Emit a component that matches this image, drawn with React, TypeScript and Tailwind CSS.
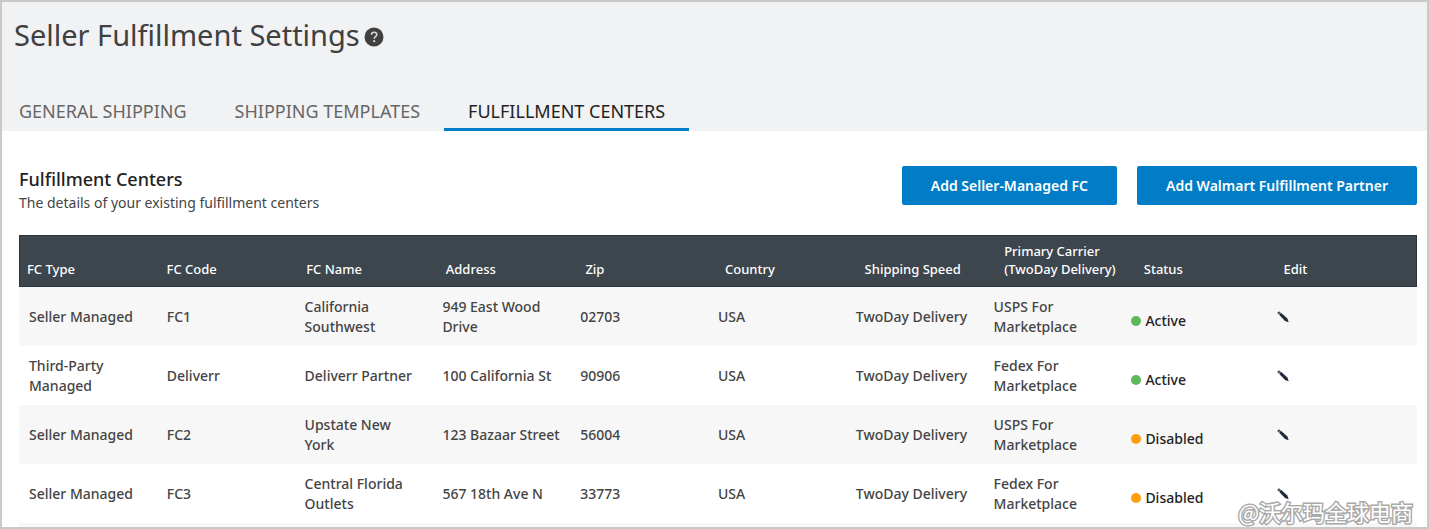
const columns = [
    "FC Type",
    "FC Code",
    "FC Name",
    "Address",
    "Zip",
    "Country",
    "Shipping Speed",
    "Primary Carrier (TwoDay Delivery)",
    "Status",
    "Edit",
]

type Center = {
    type: string
    code: string
    name: string
    address: string
    zip: string
    carrier: string
    active: boolean
}

const centers: Center[] = [
    { type: "Seller Managed", code: "FC1", name: "California Southwest", address: "949 East Wood Drive", zip: "02703", carrier: "USPS For Marketplace", active: true },
    { type: "Third-Party Managed", code: "Deliverr", name: "Deliverr Partner", address: "100 California St", zip: "90906", carrier: "Fedex For Marketplace", active: true },
    { type: "Seller Managed", code: "FC2", name: "Upstate New York", address: "123 Bazaar Street", zip: "56004", carrier: "USPS For Marketplace", active: false },
    { type: "Seller Managed", code: "FC3", name: "Central Florida Outlets", address: "567 18th Ave N", zip: "33773", carrier: "Fedex For Marketplace", active: false },
]

function HelpIcon() {
    return (
        <svg viewBox="0 0 20 20" className="size-5" aria-hidden="true">
            <circle cx="10" cy="10" r="9.5" fill="#404040" />
            <path d="M7.4 7.8c0-1.6 1.1-2.500 2.700-2.500s2.700 0.900 2.700 2.300c0 2.100-2.600 2.100-2.600 4.200" fill="none" stroke="#d4d5d6" strokeWidth="1.600" />
            <circle cx="10.200" cy="14.200" r="1.100" fill="#d4d5d6" />
        </svg>
    )
}

function PencilIcon() {
    return (
        <svg viewBox="0 0 12 12" className="size-3" aria-hidden="true">
            <path d="M0.200 2 2 0.300 3.600 1.600 1.800 3.500Z" fill="#4a4a4a" />
            <path d="M2.100 3.700 4 1.800 10.400 7.600 11.700 11.300 8 10Z" fill="#1f2937" />
        </svg>
    )
}

function CenterRow({ center }: { center: Center }) {
    return (
        <tr className="grid h-[59px] grid-cols-10 items-center pr-5 odd:bg-[#f7f7f7]">
            <td className="pl-[10px]">{center.type}</td>
            <td className="pl-[10px]">{center.code}</td>
            <td className="pr-4 pl-[10px]">{center.name}</td>
            <td className="pl-[10px]">{center.address}</td>
            <td className="pl-[10px]">{center.zip}</td>
            <td className="pl-[10px]">USA</td>
            <td className="pl-[10px] whitespace-nowrap">TwoDay Delivery</td>
            <td className="pl-[10px]">{center.carrier}</td>
            <td className="flex items-center gap-1 pt-2 pl-[10px] text-[#222]">
                <span className={center.active ? "size-[10px] rounded-full bg-[#5cb85c]" : "size-[10px] rounded-full bg-[#ff9d0a]"} />
                {center.active ? "Active" : "Disabled"}
            </td>
            <td className="pl-[18px]">
                <button type="button" aria-label={`Edit ${center.code}`} className="block cursor-pointer">
                    <PencilIcon />
                </button>
            </td>
        </tr>
    )
}

export default function App() {
    return (
        <div className="relative border-2 border-[#c9c9c9] bg-white font-['Noto_Sans','Open_Sans',sans-serif] text-[#444]">
            <header className="bg-[#f1f2f4]">
                <div className="flex items-center gap-1 pt-3 pl-3">
                    <h1 className="text-[29px] leading-[42px] text-[#404040]">Seller Fulfillment Settings</h1>
                    <button type="button" aria-label="Help" className="cursor-pointer pt-1">
                        <HelpIcon />
                    </button>
                </div>
                <nav className="flex pt-[38px] text-[18px] leading-[34px] text-[#666]">
                    <a href="#general" className="pr-6 pl-[17px]">GENERAL SHIPPING</a>
                    <a href="#templates" className="px-6">SHIPPING TEMPLATES</a>
                    <a href="#centers" aria-current="page" className="border-b-3 border-[#007dc6] px-6 text-[#222]">
                        FULFILLMENT CENTERS
                    </a>
                </nav>
            </header>

            <main className="pr-[10px] pl-[17px]">
                <div className="flex items-start justify-between pt-[35px] pb-5">
                    <div className="pt-px">
                        <h2 className="text-[18px] leading-6 font-medium text-[#222]">Fulfillment Centers</h2>
                        <p className="text-[14px] leading-6">The details of your existing fulfillment centers</p>
                    </div>
                    <div className="flex gap-5 text-[14px] font-semibold text-white">
                        <button type="button" className="h-[39px] cursor-pointer rounded-xs bg-[#007dc6] px-[29px]">
                            Add Seller-Managed FC
                        </button>
                        <button type="button" className="h-[39px] cursor-pointer rounded-xs bg-[#007dc6] px-[29px]">
                            Add Walmart Fulfillment Partner
                        </button>
                    </div>
                </div>

                <table className="block text-[14px] leading-5 font-medium">
                    <thead className="block border border-[#2c353e] bg-[#3d454d] text-[13px] leading-[18px] text-white">
                        <tr className="grid h-[50px] grid-cols-10 items-end pb-2">
                            {columns.map((column) => (
                                <th key={column} scope="col" className="pl-[7px] text-left font-medium">
                                    {column}
                                </th>
                            ))}
                        </tr>
                    </thead>
                    <tbody className="block">
                        {centers.map((center) => (
                            <CenterRow key={center.code} center={center} />
                        ))}
                        <tr className="block h-1 bg-[#f7f7f7]" />
                    </tbody>
                </table>
            </main>

            <div className="absolute right-[14px] bottom-0 font-['Noto_Sans_CJK_SC',sans-serif] text-[22px] leading-8 text-white [-webkit-text-stroke:3px_#aaa] [paint-order:stroke_fill]">
                @沃尔玛全球电商
            </div>
        </div>
    )
}
